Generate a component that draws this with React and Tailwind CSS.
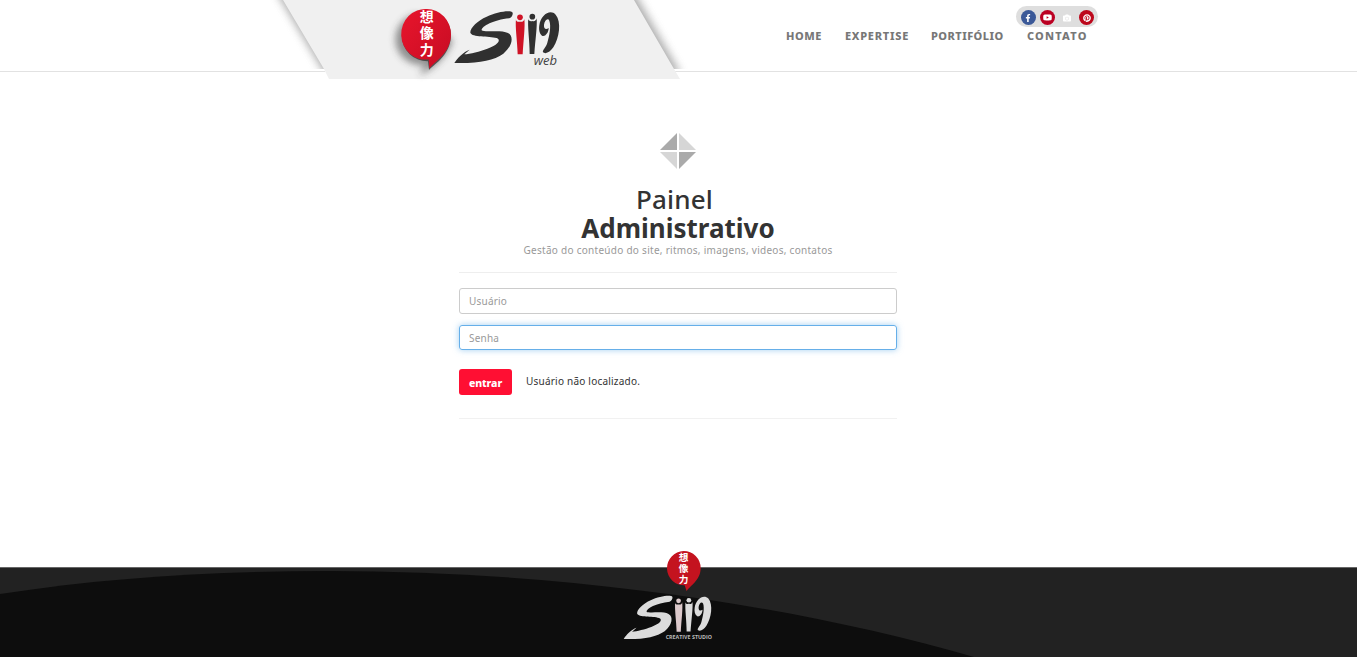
import { FaFacebookF, FaYoutube, FaCamera, FaPinterest } from "react-icons/fa";

const BRUSH = '"Noto Sans CJK JP", "Noto Sans CJK SC", sans-serif';

function Lettering({ first, rest }) {
  return (
    <g fill={rest}>
      <path d="M398 38 C392 29 350 36 320 50 C292 62 270 84 271 98 C276 113 326 107 350 114 C366 121 350 136 322 146 C300 154 270 162 253 163 L269 149 C250 156 232 174 223 189 C294 191 340 182 370 161 C398 138 402 108 384 99 C364 88 314 98 305 91 C304 79 340 60 388 55 C396 51 399 44 398 38 Z" />
      <g fill={first}>
        <circle cx="420" cy="52" r="8.5" />
        <path d="M408 57 C407 63 413 67 420 65 C427 67 432 63 433 57 C436 80 430 125 428 163 L413 163 C412 125 405 80 408 57 Z" />
      </g>
      <circle cx="457" cy="50" r="8.5" />
      <path d="M445 55 C444 61 450 65 457 63 C464 65 469 61 470 55 C472 80 466 120 463 162 L449 162 C449 120 442 80 445 55 Z" />
      <path d="M478 76 C482 45 511 26 527 44 C545 66 538 113 520 142 C511 155 498 164 489 157 C487 150 498 142 502 128 C508 108 514 78 508 62 C503 52 494 62 492 74 C491 87 498 90 506 84 C506 99 494 112 486 107 C478 101 476 88 478 76 Z" />
    </g>
  );
}

function HeaderBrand() {
  return (
    <svg className="absolute left-[260px] top-0" width="440" height="84" viewBox="260 0 440 84">
      <defs>
        <filter id="edge" x="-20%" y="-20%" width="140%" height="140%"><feGaussianBlur stdDeviation="4.5" /></filter>
        <filter id="soft" x="-40%" y="-40%" width="180%" height="180%"><feGaussianBlur stdDeviation="11" /></filter>
        <clipPath id="shade"><rect x="260" y="0" width="440" height="69" /></clipPath>
        <linearGradient id="red" x1="0" y1="0" x2="1" y2="1">
          <stop offset="0" stopColor="#e8152c" /><stop offset="1" stopColor="#c60c23" />
        </linearGradient>
      </defs>
      <rect x="325" y="70" width="350" height="3" fill="#fff" />
      <g clipPath="url(#shade)">
        <path d="M275 -10 L325 74 L681 74 L633 -10 Z" fill="#777" opacity=".6" filter="url(#edge)" />
      </g>
      <path d="M283 0 L324 69 L329 79 L680 79 L674 69 L634 0 Z" fill="#f0f0f0" />
      <g transform="translate(380 0) scale(.33333)">
        <path d="M112 42 A74 74 0 1 0 134 194 L118 226 C155 210 205 170 218 120 Z" fill="#333" opacity=".5" filter="url(#soft)" />
        <path d="M141 27 A76 76 0 1 0 144 181 L147 207 C164 188 210 164 213 105 A72 76 0 0 0 141 27 Z" fill="#333" transform="translate(0 3)" opacity=".75" />
        <path d="M141 27 A72 76 0 1 0 146 178 L148 206 C164 184 213 160 213 103 A72 76 0 0 0 141 27 Z" fill="url(#red)" />
        <g fill="#fff" fontFamily={BRUSH} fontWeight="700" fontSize="42" textAnchor="middle">
          <text x="140" y="66">想</text><text x="140" y="115">像</text><text x="140" y="164">力</text>
        </g>
        <Lettering first="#cf1326" rest="#303030" />
        <text x="461" y="194" fontFamily='"Open Sans", sans-serif' fontStyle="italic" fontSize="36" textLength="70" lengthAdjust="spacingAndGlyphs" fill="#444">web</text>
      </g>
    </svg>
  );
}

function FooterBrand() {
  return (
    <svg className="absolute left-[600px] -top-[28px]" width="140" height="117" viewBox="0 0 420 351">
      <path d="M251 33 A51 51 0 1 0 254 136 L260 154 C268 138 302 122 302 84 A51 51 0 0 0 251 33 Z" fill="#c4131f" />
      <g fill="#fff" fontFamily={BRUSH} fontWeight="700" fontSize="29" textAnchor="middle">
        <text x="251" y="62">想</text><text x="251" y="96">像</text><text x="251" y="130">力</text>
      </g>
      <g transform="translate(-115 139) scale(.835)">
        <Lettering first="#dcc9cb" rest="#dcdcdc" />
      </g>
      <text x="197" y="298" fontFamily='"Open Sans", sans-serif' fontWeight="700" fontSize="15" textLength="139" lengthAdjust="spacingAndGlyphs" fill="#bbb">CREATIVE STUDIO</text>
    </svg>
  );
}

const dot = "flex size-[15px] items-center justify-center rounded-full text-white";

export default function App() {
  return (
    <div className="flex h-[657px] w-[1357px] flex-col overflow-hidden bg-white font-['Noto_Sans',sans-serif] text-[#333]">
      <header className="relative h-[72px] shrink-0 border-b border-[#e2e2e2]">
        <HeaderBrand />
        <div className="flex flex-col pl-[786px] pt-[6px]">
          <div className="ml-[230px] flex h-[21px] w-[82px] items-center gap-[4.5px] rounded-full bg-[#dedede] pl-[4.5px] pt-[2px]">
            <span className={`${dot} bg-[#3b5998]`}><FaFacebookF size={8} /></span>
            <span className={`${dot} bg-[#bb0022]`}><FaYoutube size={9} /></span>
            <span className={dot}><FaCamera size={8} /></span>
            <span className={`${dot} bg-[#bd081c]`}><FaPinterest size={8} /></span>
          </div>
          <nav className="flex h-[18px] items-center whitespace-nowrap text-[11px] font-extrabold text-[#777]">
            <a className="w-[59px] tracking-[0.5px]">HOME</a>
            <a className="w-[86px] tracking-[0.75px]">EXPERTISE</a>
            <a className="w-[96px] tracking-[0.45px]">PORTIFÓLIO</a>
            <a className="tracking-[1.2px]">CONTATO</a>
          </nav>
        </div>
      </header>

      <main className="ml-[459px] flex w-[438px] flex-1 flex-col pt-[61px]">
        <svg className="mx-auto" width="36" height="36" viewBox="0 0 36 36">
          <path d="M17 0V17H0Z M19 36V19H36Z" fill="#aaa" />
          <path d="M19 0V17H36Z M17 36V19H0Z" fill="#d6d6d6" />
        </svg>
        <h1 className="mt-[16px] text-center text-[26px] leading-[29px]">
          <span className="block pr-[7px] font-medium tracking-[0.2px]">Painel</span>
          <strong className="block font-bold">Administrativo</strong>
        </h1>
        <p className="text-center text-[10px] leading-[14px] tracking-[0.28px] whitespace-nowrap text-[#999]">Gestão do conteúdo do site, ritmos, imagens, videos, contatos</p>
        <hr className="mt-[15px] border-[#eee]" />
        <form className="flex flex-col">
          <input className="mt-[15px] h-[26px] rounded-[3px] border border-[#ccc] px-[9px] text-[10px] tracking-[0.2px] outline-none placeholder:text-[#999]" placeholder="Usuário" />
          <input className="mt-[11px] h-[25px] rounded-[3px] border border-[#66afe9] px-[9px] text-[10px] tracking-[0.2px] shadow-[0_0_6px_rgba(102,175,233,0.6)] outline-none placeholder:text-[#999]" placeholder="Senha" />
          <div className="mt-[19px] flex h-[26px]">
            <button type="button" className="w-[53px] rounded-[3px] bg-[#ff0f33] pt-[3px] text-[10.5px] font-extrabold tracking-[-0.1px] text-white">entrar</button>
            <span className="ml-[14px] text-[10px] leading-[25px] tracking-[0.22px] whitespace-nowrap">Usuário não localizado.</span>
          </div>
        </form>
        <hr className="mt-[23px] border-[#f1f1f1]" />
      </main>

      <footer className="relative h-[90px] shrink-0 border-t border-[#666] bg-[#222]">
        <svg className="block" width="1357" height="89" viewBox="0 568 1357 89">
          <path d="M0 594 C110 577 220 571 330 571 C560 571 790 604 974 657 L0 657 Z" fill="#0d0d0d" />
        </svg>
        <FooterBrand />
      </footer>
    </div>
  );
}
